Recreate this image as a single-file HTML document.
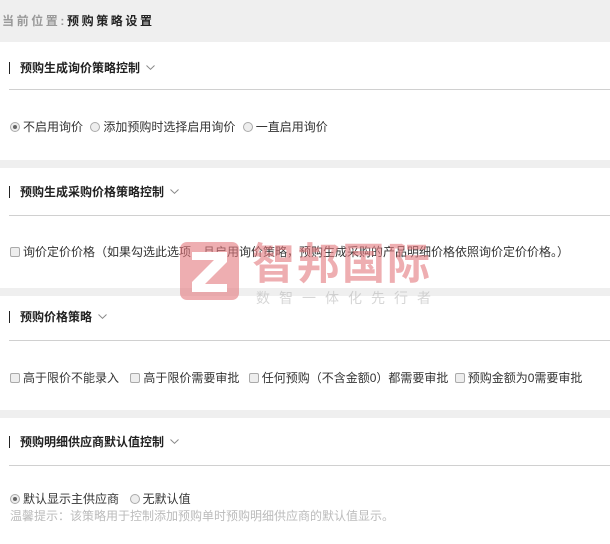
<!DOCTYPE html>
<html><head><meta charset="utf-8"><style>
*{margin:0;padding:0;box-sizing:border-box}
body{width:610px;height:544px;overflow:hidden;background:#fff;font-family:"Liberation Sans","Noto Sans CJK SC",sans-serif;font-size:12px;color:#333;position:relative}
.a{position:absolute;white-space:nowrap}
.band{position:absolute;left:0;width:610px;background:#efefef}
.hd{position:absolute;left:9px;font-weight:bold;font-size:12px;color:#222;border-left:1px solid #222;padding-left:10px;line-height:12px}
.hd svg{margin-left:6px;vertical-align:2px}
.ln{position:absolute;left:9px;right:0;height:1px;background:#d0d0d0}
.r{display:inline-block;width:10px;height:10px;border:1px solid #aaa;border-radius:50%;background:#eee;vertical-align:-1px;margin-right:3px;margin-left:4px;position:relative}
.r.on::after{content:"";position:absolute;left:2px;top:2px;width:4px;height:4px;border-radius:50%;background:#666}
.c{display:inline-block;width:10px;height:10px;border:1px solid #aaa;border-radius:2px;background:#eee;vertical-align:-1px;margin-right:3px;margin-left:4px}
.opt{position:absolute;left:6px;font-size:12px;color:#333}
</style></head><body>
<div class="band" style="top:0;height:42px"></div>
<div class="a" style="left:2px;top:12px;font-size:12px;font-weight:bold;letter-spacing:2.6px;color:#999">当前位置:<span style="color:#222">预购策略设置</span></div>

<div class="hd" style="top:62px">预购生成询价策略控制<svg width="9" height="5" viewBox="0 0 9 5"><path d="M0.5 0.5L4.5 4.3L8.5 0.5" fill="none" stroke="#888" stroke-width="1"/></svg></div>
<div class="ln" style="top:89px"></div>
<div class="opt" style="top:118px"><i class="r on"></i>不启用询价 <i class="r"></i>添加预购时选择启用询价 <i class="r"></i>一直启用询价</div>

<div class="band" style="top:160px;height:8px"></div>
<div class="hd" style="top:186px">预购生成采购价格策略控制<svg width="9" height="5" viewBox="0 0 9 5"><path d="M0.5 0.5L4.5 4.3L8.5 0.5" fill="none" stroke="#888" stroke-width="1"/></svg></div>
<div class="ln" style="top:215px"></div>
<div class="opt" style="top:243px"><i class="c"></i>询价定价价格（如果勾选此选项，且启用询价策略，预购生成采购的产品明细价格依照询价定价价格。）</div>

<div class="band" style="top:288px;height:8px"></div>
<div class="hd" style="top:311px">预购价格策略<svg width="9" height="5" viewBox="0 0 9 5"><path d="M0.5 0.5L4.5 4.3L8.5 0.5" fill="none" stroke="#888" stroke-width="1"/></svg></div>
<div class="ln" style="top:340px"></div>
<div class="opt" style="top:369px"><i class="c"></i>高于限价不能录入 <i class="c" style="margin-left:8px"></i>高于限价需要审批 <i class="c" style="margin-left:6px"></i>任何预购（不含金额0）都需要审批 <i class="c" style="margin-left:3px"></i>预购金额为0需要审批</div>

<div class="band" style="top:410px;height:8px"></div>
<div class="hd" style="top:436px">预购明细供应商默认值控制<svg width="9" height="5" viewBox="0 0 9 5"><path d="M0.5 0.5L4.5 4.3L8.5 0.5" fill="none" stroke="#888" stroke-width="1"/></svg></div>
<div class="ln" style="top:465px"></div>
<div class="opt" style="top:490px"><i class="r on"></i>默认显示主供应商 &nbsp;<i class="r"></i>无默认值</div>
<div class="opt" style="left:10px;top:507px;color:#bbb">温馨提示：该策略用于控制添加预购单时预购明细供应商的默认值显示。</div>

<div class="a" style="left:180px;top:242px;width:59px;height:58px;border-radius:7px;background:rgba(226,120,125,0.6)">
<svg width="59" height="58" viewBox="0 0 59 58"><path d="M12 10H47V20L25 42H47V50H12V40L34 18H12Z" fill="#fff"/></svg></div>
<div class="a" style="left:252px;top:242px;font-size:43px;font-weight:bold;color:rgba(226,120,125,0.6);letter-spacing:2px;line-height:46px">智邦国际</div>
<div class="a" style="left:256px;top:288px;font-size:14px;color:rgba(180,180,180,0.55);letter-spacing:9px">数智一体化先行者</div>
</body></html>
